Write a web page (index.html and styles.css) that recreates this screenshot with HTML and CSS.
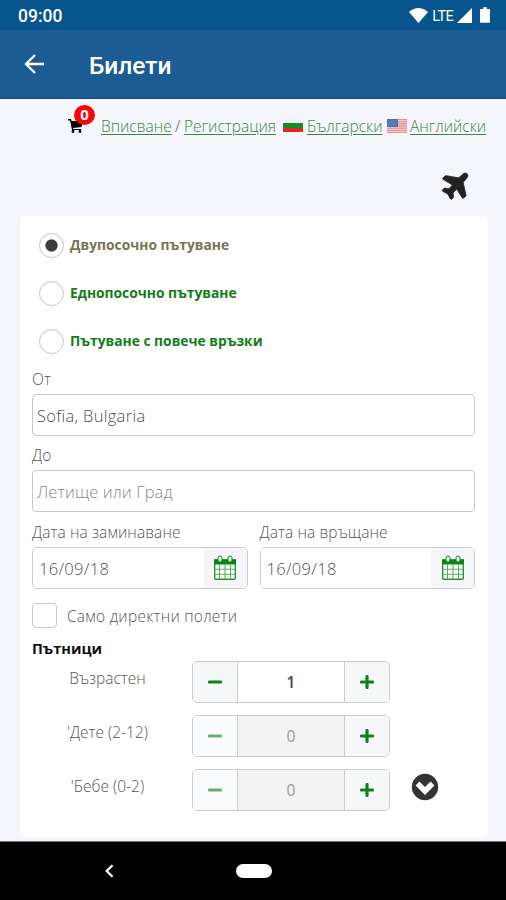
FILE: index.html
```html
<!DOCTYPE html>
<html lang="bg">
<head>
    <meta charset="UTF-8">
    <meta name="viewport" content="width=device-width, initial-scale=1.0">
    <title>Билети</title>
    <link rel="stylesheet" href="styles.css">
</head>
<body>
    <svg class="sprite" width="0" height="0">
        <symbol id="calendar" viewBox="0 0 24 26">
            <path d="M1.700 5h20.600v18.300a1 1 0 0 1-1 1H2.700a1 1 0 0 1-1-1z" fill="#fff" stroke="#2b9332" stroke-width="1.400"/>
            <path d="M1 4.500h22v5H1z" fill="#0c8216"/>
            <path d="M6.500 9.500v14.500M12 9.500v14.500M17.500 9.500v14.500M2 14.300h20M2 19.300h20" stroke="#5aab60" stroke-width="1.100"/>
            <rect x="5" y="1" width="4" height="6" rx="2" fill="#e8f3e9" stroke="#138a1c" stroke-width="1"/>
            <rect x="15" y="1" width="4" height="6" rx="2" fill="#e8f3e9" stroke="#138a1c" stroke-width="1"/>
        </symbol>
        <symbol id="minus" viewBox="0 0 14 14">
            <path d="M1.500 7h11" stroke="currentColor" stroke-width="3.200" stroke-linecap="round"/>
        </symbol>
        <symbol id="plus" viewBox="0 0 14 14">
            <path d="M1.500 7h11M7 1.500v11" stroke="currentColor" stroke-width="3.200" stroke-linecap="round"/>
        </symbol>
    </svg>

    <div class="status-bar">
        <span class="clock">09:00</span>
        <svg class="wifi" width="19" height="15" viewBox="0 0 19 15"><path d="M0 4Q9.500-4 19 4L9.500 15z" fill="#fff"/></svg>
        <span class="lte">LTE</span>
        <svg class="signal" width="15" height="15" viewBox="0 0 15 15"><path d="M15 0v15H0z" fill="#fff"/></svg>
        <svg class="battery" width="10" height="16" viewBox="0 0 11 17"><path d="M3.500 0h4v2H10a1 1 0 0 1 1 1v13a1 1 0 0 1-1 1H1a1 1 0 0 1-1-1V3a1 1 0 0 1 1-1h2.500z" fill="#fff"/></svg>
    </div>

    <header class="app-bar">
        <svg width="21" height="20" viewBox="0 0 21 20"><path d="M20 10H2M11 1L2 10l9 9" fill="none" stroke="#fff" stroke-width="2.300"/></svg>
        <h1>Билети</h1>
    </header>

    <main>
        <nav class="links">
            <div class="cart">
                <svg width="15" height="14" viewBox="0 0 15 14"><path d="M0 0h3l.6 2H15l-1.500 6-8.500 1 .3.900H13V11H4L2 1.500H0z"/><circle cx="5" cy="12.500" r="1.400"/><circle cx="12" cy="12.500" r="1.400"/></svg>
                <span class="cart-badge">0</span>
            </div>
            <a href="#" class="login">Вписване</a>
            <span class="slash">/</span>
            <a href="#" class="register">Регистрация</a>
            <svg class="flag-bg" width="20" height="13" viewBox="0 0 20 13"><path fill="#f2f2ee" d="M0 0h20v4.500H0z"/><path fill="#168c2b" d="M0 4h20v5H0z"/><path fill="#dc2a20" d="M0 9h20v4H0z"/></svg>
            <a href="#" class="bulgarian">Български</a>
            <svg class="flag-us" width="20" height="14" viewBox="0 0 20 14"><path fill="#f3cccd" d="M0 0h20v14H0z"/><path stroke="#e58f92" stroke-width="1.100" d="M0 .5h20M0 2.700h20M0 4.900h20M0 7.100h20M0 9.300h20M0 11.500h20M0 13.500h20"/><path fill="#4872b2" d="M0 0h11v8H0z"/><path stroke="#7f9fcf" stroke-dasharray="1 1.500" d="M1 2h9M2 4h8M1 6h9"/></svg>
            <a href="#" class="english">Английски</a>
        </nav>

        <div class="plane">
            <svg width="28" height="28" viewBox="0 0 28 28"><path d="M26.200 1.800c1.300 1.300.6 3.200-.6 4.600l-3.400 4L25 23c.1.500 0 .9-.3 1.200l-2 1.800c-.5.400-1.200.3-1.500-.3l-5.400-8.500-3.800 3.600.6 4c0 .4 0 .7-.3.900l-1.500 1.400c-.5.400-1.100.3-1.400-.2l-2.700-4.900-5-2.700c-.5-.3-.6-1-.2-1.400l1.400-1.500c.3-.3.600-.4.900-.3l4.100.6 3.500-3.700L2.300 7.500c-.6-.3-.7-1.100-.3-1.500l2-2c.3-.3.700-.4 1.200-.3L17.600 5.800l4-3.400c1.300-1.200 3.300-1.900 4.600-.6z" fill="#222" stroke="#222" stroke-width=".8"/></svg>
        </div>

        <form class="card">
            <div class="trip-types">
                <label class="selected"><input type="radio" name="trip" checked><span>Двупосочно пътуване</span></label>
                <label><input type="radio" name="trip"><span>Еднопосочно пътуване</span></label>
                <label><input type="radio" name="trip"><span>Пътуване с повече връзки</span></label>
            </div>

            <div class="field">
                <label for="from">От</label>
                <input type="text" id="from" value="Sofia, Bulgaria">
            </div>
            <div class="field">
                <label for="to">До</label>
                <input type="text" id="to" placeholder="Летище или Град">
            </div>

            <div class="dates">
                <div class="field">
                    <label for="depart">Дата на заминаване</label>
                    <div class="date-input">
                        <input type="text" id="depart" value="16/09/18">
                        <span class="addon"><svg width="24" height="26"><use href="#calendar"/></svg></span>
                    </div>
                </div>
                <div class="field">
                    <label for="return">Дата на връщане</label>
                    <div class="date-input">
                        <input type="text" id="return" value="16/09/18">
                        <span class="addon"><svg width="24" height="26"><use href="#calendar"/></svg></span>
                    </div>
                </div>
            </div>

            <label class="direct"><input type="checkbox"><span>Само директни полети</span></label>

            <h2>Пътници</h2>
            <div class="passengers">
                <div class="passenger">
                    <span class="who">Възрастен</span>
                    <div class="stepper">
                        <button type="button"><svg width="14" height="14"><use href="#minus"/></svg></button>
                        <span class="count">1</span>
                        <button type="button"><svg width="14" height="14"><use href="#plus"/></svg></button>
                    </div>
                </div>
                <div class="passenger">
                    <span class="who">'Дете (2-12)</span>
                    <div class="stepper empty">
                        <button type="button" disabled><svg width="14" height="14"><use href="#minus"/></svg></button>
                        <span class="count">0</span>
                        <button type="button"><svg width="14" height="14"><use href="#plus"/></svg></button>
                    </div>
                </div>
                <div class="passenger">
                    <span class="who">'Бебе (0-2)</span>
                    <div class="stepper empty">
                        <button type="button" disabled><svg width="14" height="14"><use href="#minus"/></svg></button>
                        <span class="count">0</span>
                        <button type="button"><svg width="14" height="14"><use href="#plus"/></svg></button>
                    </div>
                    <svg class="more" width="28" height="28" viewBox="0 0 28 28"><circle cx="14" cy="14" r="13.200" fill="#333"/><path d="M6.500 10.500l7.500 7.500 7.500-7.500" fill="none" stroke="#fff" stroke-width="5.500"/></svg>
                </div>
            </div>
        </form>
    </main>

    <footer class="nav-bar">
        <svg width="9" height="14" viewBox="0 0 9 14"><path d="M7.500 1.200L1.700 7l5.800 5.800" fill="none" stroke="#fff" stroke-width="2.300"/></svg>
        <span class="home"></span>
    </footer>
</body>
</html>
```
FILE: styles.css
```css
* {
    margin: 0;
    padding: 0;
    box-sizing: border-box;
}

body {
    display: flex;
    flex-direction: column;
    width: 506px;
    height: 900px;
    overflow: hidden;
    font-family: "Open Sans", "Noto Sans", sans-serif;
    font-weight: 300;
    font-size: 15.5px;
    color: #555;
    background-color: #f5f6fb;
}

svg {
    display: block;
    flex-shrink: 0;
}

.sprite {
    position: absolute;
}

.status-bar {
    display: flex;
    align-items: center;
    height: 30px;
    padding: 0 16px 0 18px;
    background-color: #07558c;
    color: #fff;
    font-family: Roboto, sans-serif;
}

.clock {
    margin-right: auto;
    padding-top: 2px;
    font-size: 17.5px;
    font-weight: 500;
}

.lte {
    margin: 2px 4px 0 4px;
    font-size: 14.5px;
    font-weight: 400;
    letter-spacing: -0.7px;
}

.signal {
    margin-right: 8px;
}

.app-bar {
    display: flex;
    align-items: center;
    gap: 44px;
    height: 69px;
    padding: 0 0 1px 24px;
    background-color: #1a5c93;
    border-bottom: 1px solid #0b4585;
}

.app-bar h1 {
    padding-top: 3px;
    color: #fff;
    font-family: Roboto, sans-serif;
    font-size: 24.5px;
    font-weight: 500;
}

main {
    flex: 1;
    background-color: #f5f6fb;
}

.links {
    display: flex;
    align-items: center;
    height: 53px;
    padding-left: 68px;
    white-space: nowrap;
}

.links a {
    color: #3f8542;
    text-underline-offset: 2px;
}

.cart {
    position: relative;
    width: 33px;
}

.cart-badge {
    position: absolute;
    left: 6px;
    top: -14px;
    width: 21px;
    height: 20px;
    border-radius: 50%;
    background-color: #f90507;
    color: #fff;
    font-size: 15px;
    font-weight: 700;
    line-height: 18px;
    text-align: center;
}

.login {
    width: 74px;
}

.slash {
    width: 9px;
}

.register {
    width: 99px;
}

.flag-bg,
.flag-us {
    margin-right: 4px;
}

.bulgarian {
    width: 80px;
}

.flag-us {
    margin-right: 3px;
}

.plane {
    display: flex;
    justify-content: flex-end;
    height: 64px;
    padding: 20px 37px 0 0;
}

.card {
    width: 468px;
    height: 621px;
    margin-left: 20px;
    padding: 5px 13px 0 12px;
    border-radius: 5px;
    background-color: #fff;
}

.trip-types label {
    display: flex;
    align-items: center;
    gap: 6px;
    height: 48px;
    padding-left: 7px;
    color: #127d18;
    font-size: 13.8px;
    font-weight: 700;
}

.trip-types span {
    padding-bottom: 1px;
}

.trip-types .selected {
    color: #777454;
}

.trip-types input {
    appearance: none;
    width: 25px;
    height: 25px;
    border: 1px solid #c4c4c4;
    border-radius: 50%;
    background-color: #fff;
}

.trip-types input:checked {
    background: radial-gradient(circle, #3c3c3c 5.600px, #fff 6.600px);
}

.field label {
    display: block;
    height: 29px;
    line-height: 28px;
    letter-spacing: 0.1px;
}

.field input {
    display: block;
    width: 100%;
    height: 42px;
    padding: 0 4px;
    border: 1px solid #c7c7c7;
    border-radius: 4px;
    background-color: #fff;
    color: #505050;
    font: inherit;
    font-size: 16.5px;
    letter-spacing: 0.3px;
}

.field input::placeholder {
    color: #888;
    opacity: 1;
    letter-spacing: 0.1px;
}

.field + .field {
    margin-top: 5px;
}

.dates {
    display: flex;
    gap: 12px;
    margin-top: 6px;
}

.dates .field {
    width: 216px;
    margin-top: 0;
}

.date-input {
    display: flex;
    height: 42px;
    border: 1px solid #ccc;
    border-radius: 5px;
    overflow: hidden;
}

.date-input input {
    flex: 1;
    width: 0;
    height: 40px;
    padding-left: 6px;
    border: 0;
    border-radius: 0;
}

.addon {
    display: flex;
    align-items: center;
    justify-content: center;
    width: 43px;
    background-color: #f5f6f9;
}

.direct {
    display: flex;
    align-items: center;
    gap: 10px;
    height: 25px;
    margin-top: 14px;
    letter-spacing: 0.25px;
}

.direct input {
    appearance: none;
    width: 25px;
    height: 25px;
    border: 1px solid #c8c8c8;
    border-radius: 4px;
}

h2 {
    height: 33px;
    padding-top: 9px;
    color: #111;
    font-size: 14.6px;
    font-weight: 700;
    line-height: 23px;
}

.passenger {
    display: flex;
    align-items: center;
    height: 42px;
    margin-bottom: 12px;
}

.who {
    width: 151px;
    margin-right: 9px;
    padding-bottom: 8px;
    text-align: center;
}

.stepper {
    display: flex;
    width: 198px;
    height: 42px;
    border: 1px solid #ccc;
    border-radius: 5px;
    overflow: hidden;
}

.stepper button {
    display: flex;
    align-items: center;
    justify-content: center;
    width: 44px;
    border: 0;
    background-color: #f6f7f9;
    color: #118219;
}

.stepper button:disabled {
    background-color: #fafbfd;
    color: #6dad72;
}

.count {
    flex: 1;
    border: solid #ccc;
    border-width: 0 1px;
    background-color: #fff;
    color: #444;
    font-weight: 600;
    line-height: 40px;
    text-align: center;
}

.empty .count {
    background-color: #f3f3f3;
    color: #999;
    font-weight: 400;
}

.more {
    margin: -6px 0 0 21px;
}

.nav-bar {
    display: flex;
    align-items: center;
    gap: 122px;
    height: 59px;
    padding-left: 105px;
    border-top: 1px solid #777;
    background-color: #000;
}

.home {
    width: 36px;
    height: 14px;
    border-radius: 7px;
    background-color: #fff;
}
```
